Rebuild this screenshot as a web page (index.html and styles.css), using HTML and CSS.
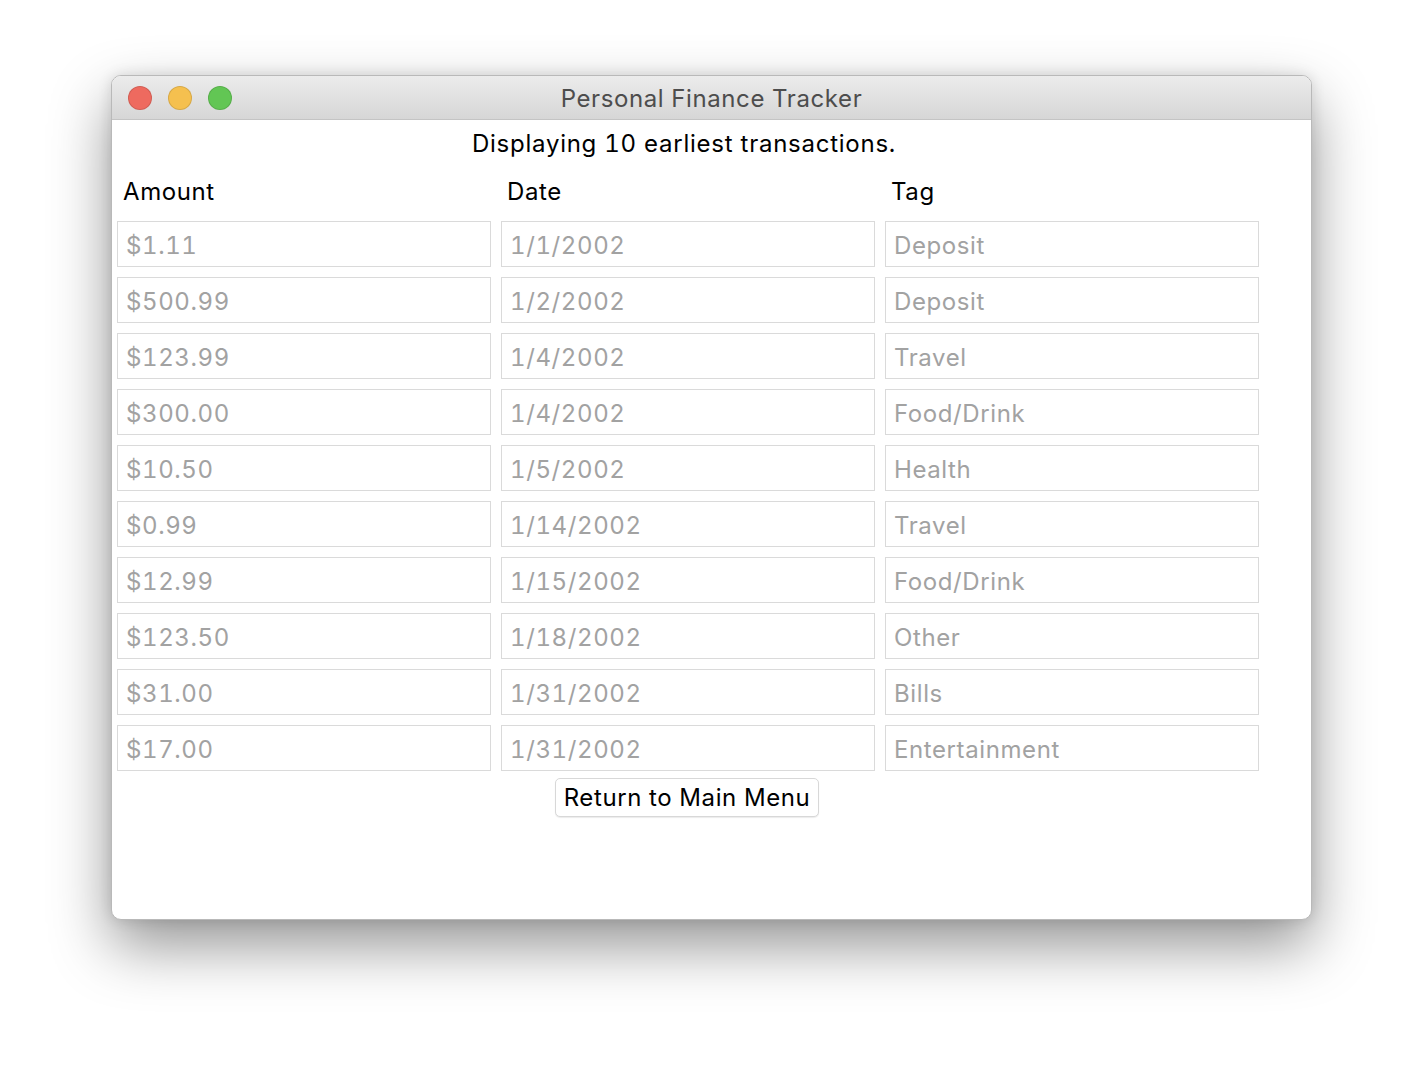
FILE: index.html
```html
<!DOCTYPE html>
<html>
<head>
<meta charset="utf-8">
<link rel="stylesheet" href="styles.css">
</head>
<body>
<div class="window">
  <div class="titlebar">
    <div class="lights">
      <span class="light red"></span>
      <span class="light yellow"></span>
      <span class="light green"></span>
    </div>
    <div class="title">Personal Finance Tracker</div>
  </div>
  <div class="content">
    <div class="heading">Displaying 10 earliest transactions.</div>
    <div class="table">
      <div class="label">Amount</div><div class="label">Date</div><div class="label">Tag</div>
      <div class="cell">$1.11</div><div class="cell">1/1/2002</div><div class="cell">Deposit</div>
      <div class="cell">$500.99</div><div class="cell">1/2/2002</div><div class="cell">Deposit</div>
      <div class="cell">$123.99</div><div class="cell">1/4/2002</div><div class="cell">Travel</div>
      <div class="cell">$300.00</div><div class="cell">1/4/2002</div><div class="cell">Food/Drink</div>
      <div class="cell">$10.50</div><div class="cell">1/5/2002</div><div class="cell">Health</div>
      <div class="cell">$0.99</div><div class="cell">1/14/2002</div><div class="cell">Travel</div>
      <div class="cell">$12.99</div><div class="cell">1/15/2002</div><div class="cell">Food/Drink</div>
      <div class="cell">$123.50</div><div class="cell">1/18/2002</div><div class="cell">Other</div>
      <div class="cell">$31.00</div><div class="cell">1/31/2002</div><div class="cell">Bills</div>
      <div class="cell">$17.00</div><div class="cell">1/31/2002</div><div class="cell">Entertainment</div>
    </div>
    <div class="actions">
      <button class="btn">Return to Main Menu</button>
    </div>
  </div>
</div>
</body>
</html>
```
FILE: styles.css
```css
html, body {
  margin: 0;
  padding: 0;
  background: #ffffff;
}
html {
  min-height: 1068px;
}
body {
  box-sizing: border-box;
  min-height: 1068px;
  padding: 75px 0 0 111px;
  font-family: Inter, "Noto Sans", sans-serif;
  font-variant-numeric: tabular-nums;
  letter-spacing: 0.6px;
}
.window {
  width: 1199px;
  height: 843px;
  border: 1px solid #b9b9b9;
  border-radius: 10px;
  background: #ffffff;
  box-shadow: 0 26px 60px rgba(0, 0, 0, 0.42), 0 0 14px rgba(0, 0, 0, 0.12);
  overflow: hidden;
}
.titlebar {
  position: relative;
  height: 43px;
  border-bottom: 1px solid #c4c4c4;
  background: linear-gradient(#ececec, #d6d6d6);
  display: flex;
  align-items: center;
  justify-content: center;
}
.lights {
  position: absolute;
  left: 16px;
  top: 10px;
  display: flex;
  gap: 16px;
}
.light {
  width: 22px;
  height: 22px;
  border-radius: 50%;
  border: 1px solid rgba(0, 0, 0, 0.12);
}
.red { background: #ee6a5f; }
.yellow { background: #f5c04f; }
.green { background: #62c654; }
.title {
  font-size: 24px;
  color: #4d4d4d;
  padding-top: 2px;
}
.content {
  width: 1134px;
  padding-left: 5px;
  display: flex;
  flex-direction: column;
  align-items: center;
}
.heading {
  font-size: 24px;
  color: #000;
  line-height: 29px;
  margin-top: 9px;
  letter-spacing: 0.75px;
}
.table {
  align-self: flex-start;
  display: grid;
  grid-template-columns: repeat(3, 374px);
  grid-auto-rows: 46px;
  column-gap: 10px;
  row-gap: 10px;
  margin-top: 7px;
}
.label {
  font-size: 24px;
  color: #000;
  padding-left: 6px;
  height: 36px;
  line-height: 36px;
  margin-top: 9px;
}
.cell {
  box-sizing: border-box;
  border: 1px solid #dadada;
  font-size: 24px;
  color: #a2a2a2;
  padding-left: 8px;
  line-height: 48px;
  overflow: hidden;
}
.actions {
  margin-top: 7px;
  padding-left: 6px;
}
.btn {
  font-family: inherit;
  font-variant-numeric: inherit;
  letter-spacing: inherit;
  font-size: 24px;
  color: #000;
  background: #fff;
  border: 1px solid #d8d8d8;
  border-radius: 5px;
  height: 39px;
  padding: 0 8px;
  box-shadow: 0 1px 1px rgba(0, 0, 0, 0.08);
}
```
